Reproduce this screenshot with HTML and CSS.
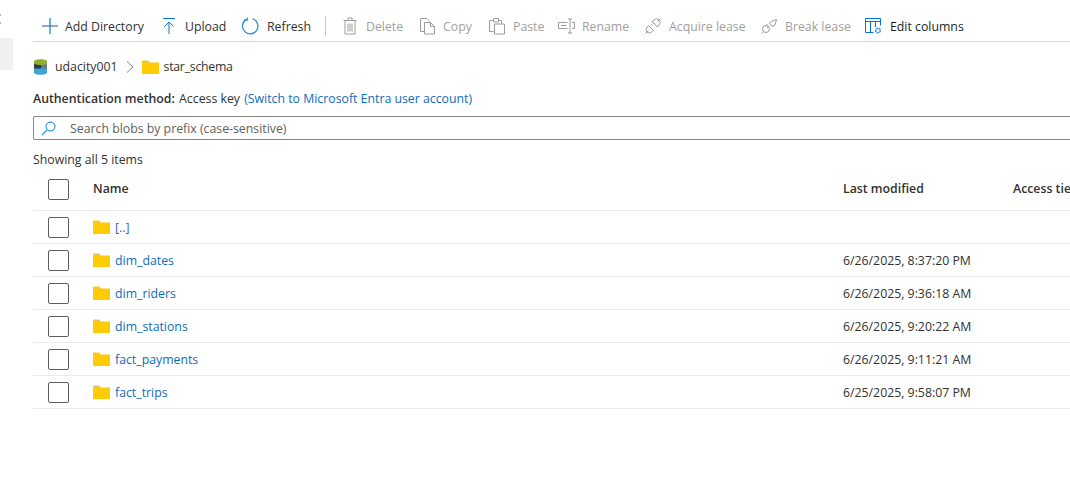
FILE: index.html
```html
<!DOCTYPE html>
<html lang="en">
<head>
<meta charset="utf-8">
<title>star_schema</title>
<link rel="stylesheet" href="styles.css">
</head>
<body>
<div class="page">
  <aside class="rail"><span class="rail-dot"></span><span class="rail-dot"></span><span class="rail-item"></span></aside>
  <main class="main">
    <div class="toolbar">
      <button class="tool w-add"><svg class="ic" width="18" height="18" viewBox="0 0 18 18"><path d="M9 1v16" stroke="#0078d4" stroke-width="1.200" fill="none"/><path d="M1 9h16" stroke="#4a6fa5" stroke-width="1.200" fill="none"/></svg><span>Add Directory</span></button>
      <button class="tool w-up"><svg class="ic" width="14" height="18" viewBox="0 0 14 18"><path d="M1 1.500h12M7 17V5M2.500 9.500 7 5l4.500 4.500" stroke="#0078d4" fill="none"/></svg><span>Upload</span></button>
      <button class="tool w-ref"><svg class="ic" width="18" height="18" viewBox="0 0 18 18"><path d="M5.500 2.400A7.700 7.700 0 1 0 11.500 1.800M6.200 .5V3.200H3" stroke="#1b87dc" stroke-width="1.200" fill="none"/></svg><span>Refresh</span></button>
      <span class="sep"></span>
      <button class="tool off w-del"><svg class="ic" width="14" height="18" viewBox="0 0 14 18"><path d="M.5 3.500h13M2 3.500V17h10V3.500M5 3.500V1h4v2.500M5 6.500v8M7 6.500v8M9 6.500v8" stroke="#9c9c9c" fill="none"/></svg><span>Delete</span></button>
      <button class="tool off w-copy"><svg class="ic" width="15" height="18" viewBox="0 0 15 18"><path d="M4.500 14.500H.5V1.500H7L10 4.500M4.500 5.500H10.500L14.500 9.500V17H4.500ZM10.500 5.500V9.500H14.500" stroke="#9c9c9c" fill="none"/></svg><span>Copy</span></button>
      <button class="tool off w-paste"><svg class="ic" width="16" height="18" viewBox="0 0 16 18"><path d="M4.500 14.500H.5V3.500H4M10 3.500H12.500V6.500M4.500 1.500H9.500V5H4.500ZM5.500 7H15.500V17H5.500Z" stroke="#9c9c9c" fill="none"/></svg><span>Paste</span></button>
      <button class="tool off w-ren"><svg class="ic" width="17" height="16" viewBox="0 0 17 16"><path d="M9.500 4.500H.5V10.500H9.500M3 7.500H8.500M14 4.500H16.500V10.500H14M10 1H14M10 15H14M12 1V15" stroke="#9c9c9c" fill="none"/></svg><span>Rename</span></button>
      <button class="tool off w-acq"><svg class="ic" width="16" height="16" viewBox="0 0 16 16"><path d="M.5 15.500 3.500 12.500M12.500 3.500 15.500.5M6 6 7.500 7.500M8.500 4.500 10 6M3.500 7.500 8.500 12.500 6.500 14a2.800 2.800 0 0 1-4.500-4.500ZM7 3.500 12.500 9 14 7a3.500 3.500 0 0 0-5-5Z" stroke="#9c9c9c" fill="none"/></svg><span>Acquire lease</span></button>
      <button class="tool off w-brk"><svg class="ic" width="17" height="16" viewBox="0 0 17 16"><path d="M.5 15.500 2.500 13.500M8 8 6 10M6.500 6 4.500 8M10 3.500 15.500 1.500 14 7 11.500 8.500 8.500 6Z" stroke="#9c9c9c" fill="none"/><circle cx="5" cy="11" r="3.500" stroke="#9c9c9c" fill="none"/></svg><span>Break lease</span></button>
      <button class="tool w-edit"><svg class="ic" width="17" height="16" viewBox="0 0 17 16"><path d="M.5 14.500V.5H15.500V7.500M.5 14.500H8.500M.5 3.500H15.500M5.500 3.500V14.500M10.500 3.500V9" stroke="#0078d4" fill="none"/><circle cx="13" cy="12.500" r="2.300" stroke="#2b8fe3" stroke-width="1.500" stroke-dasharray="2 .6" fill="none"/></svg><span class="dark">Edit columns</span></button>
    </div>

    <nav class="crumbs">
      <svg class="acct" width="13" height="16" viewBox="0 0 13 16"><path d="M0 2.500C0-.5 13-.5 13 2.500V5C13 6.500 0 6.500 0 5Z" fill="#8fb02e"/><path d="M0 4.500C2 6 5 6 7 6V10H0Z" fill="#2f3a45"/><path d="M7 6C9 6 11 6 13 4.500V10H7Z" fill="#6c7884"/><path d="M0 9.500H13V13.500C13 16.500 0 16.500 0 13.500Z" fill="#3fa3d8"/></svg>
      <span class="crumb">udacity001</span>
      <svg class="chev" width="8" height="12" viewBox="0 0 8 12"><path d="M1 .5 7 6 1 11.500" stroke="#8a8886" fill="none"/></svg>
      <svg class="folder" width="17" height="14" viewBox="0 0 17 14"><path d="M0 1.500Q0 .5 1 .5H6L8 2.500H17V14H0Z" fill="#ffcb05"/><path d="M.5 1h5L7 2.500H.5Z" fill="#e8c45c"/></svg>
      <span class="crumb tight">star_schema</span>
    </nav>

    <p class="auth"><b>Authentication method:</b> <span class="key">Access key</span> <a>(Switch to Microsoft Entra user account)</a></p>

    <div class="search">
      <svg width="15" height="15" viewBox="0 0 15 15"><circle cx="9.500" cy="5.500" r="4.500" stroke="#0078d4" fill="none"/><path d="M6 9 1 14" stroke="#3a96dd" stroke-width="1.300" fill="none"/></svg>
      <span>Search blobs by prefix (case-sensitive)</span>
    </div>

    <p class="count">Showing all 5 items</p>

    <div class="row head">
      <span class="cb"></span><span class="name">Name</span><span class="mod">Last modified</span><span class="tier">Access tier</span>
    </div>
    <div class="row">
      <span class="cb"></span><span class="name"><svg class="folder" width="17" height="14" viewBox="0 0 17 14"><path d="M0 1.500Q0 .5 1 .5H6L8 2.500H17V14H0Z" fill="#ffcb05"/><path d="M.5 1h5L7 2.500H.5Z" fill="#e8c45c"/></svg><a class="up">[..]</a></span><span class="mod"></span>
    </div>
    <div class="row">
      <span class="cb"></span><span class="name"><svg class="folder" width="17" height="14" viewBox="0 0 17 14"><path d="M0 1.500Q0 .5 1 .5H6L8 2.500H17V14H0Z" fill="#ffcb05"/><path d="M.5 1h5L7 2.500H.5Z" fill="#e8c45c"/></svg><a>dim_dates</a></span><span class="mod">6/26/2025, 8:37:20 PM</span>
    </div>
    <div class="row">
      <span class="cb"></span><span class="name"><svg class="folder" width="17" height="14" viewBox="0 0 17 14"><path d="M0 1.500Q0 .5 1 .5H6L8 2.500H17V14H0Z" fill="#ffcb05"/><path d="M.5 1h5L7 2.500H.5Z" fill="#e8c45c"/></svg><a>dim_riders</a></span><span class="mod">6/26/2025, 9:36:18 AM</span>
    </div>
    <div class="row">
      <span class="cb"></span><span class="name"><svg class="folder" width="17" height="14" viewBox="0 0 17 14"><path d="M0 1.500Q0 .5 1 .5H6L8 2.500H17V14H0Z" fill="#ffcb05"/><path d="M.5 1h5L7 2.500H.5Z" fill="#e8c45c"/></svg><a>dim_stations</a></span><span class="mod">6/26/2025, 9:20:22 AM</span>
    </div>
    <div class="row">
      <span class="cb"></span><span class="name"><svg class="folder" width="17" height="14" viewBox="0 0 17 14"><path d="M0 1.500Q0 .5 1 .5H6L8 2.500H17V14H0Z" fill="#ffcb05"/><path d="M.5 1h5L7 2.500H.5Z" fill="#e8c45c"/></svg><a>fact_payments</a></span><span class="mod">6/26/2025, 9:11:21 AM</span>
    </div>
    <div class="row">
      <span class="cb"></span><span class="name"><svg class="folder" width="17" height="14" viewBox="0 0 17 14"><path d="M0 1.500Q0 .5 1 .5H6L8 2.500H17V14H0Z" fill="#ffcb05"/><path d="M.5 1h5L7 2.500H.5Z" fill="#e8c45c"/></svg><a>fact_trips</a></span><span class="mod">6/25/2025, 9:58:07 PM</span>
    </div>
  </main>
</div>
</body>
</html>
```

FILE: styles.css
```css
* { box-sizing: border-box; }
html, body { margin: 0; height: 100%; background: #fff; overflow: hidden; }
body { font: 12.300px/16px "Open Sans", "Liberation Sans", sans-serif; color: #323130; }
.page { display: flex; width: 1070px; height: 491px; overflow: hidden; }
.rail { flex: 0 0 33px; display: flex; flex-direction: column; padding-top: 14px; }
.rail-dot { display: block; width: 1px; height: 2px; margin-bottom: 6px; background: #b5b5b5; }
.rail-item { display: block; width: 13px; height: 32px; margin-top: 8px; background: #f0f0f0; }
.main { flex: 0 0 1037px; min-width: 0; }
p { margin: 0; }
a { color: #0f6cbd; }

.toolbar { display: flex; align-items: center; height: 42px; padding-top: 11px; padding-left: 8px; border-bottom: 1px solid #d6d6d6; }
.tool { display: flex; align-items: center; height: 30px; padding: 0; border: 0; background: none; font: inherit; color: #323130; white-space: nowrap; }
.tool .ic { flex: none; }
.tool span { padding-top: 2px; }
.tool.off { color: #a19f9d; }
.tool .dark { color: #201f1e; }
.w-add { width: 121px; } .w-add span { margin-left: 6px; }
.w-up { width: 79px; } .w-up span { margin-left: 9px; }
.w-ref { width: 84px; } .w-ref span { margin-left: 8px; }
.sep { flex: none; width: 1px; height: 20px; background: #c8c8c8; margin-right: 17px; }
.w-del { width: 77px; } .w-del span { margin-left: 9px; }
.w-copy { width: 69px; } .w-copy span { margin-left: 8px; }
.w-paste { width: 69px; } .w-paste span { margin-left: 8px; }
.w-ren { width: 87px; } .w-ren span { margin-left: 7px; }
.w-acq { width: 116px; } .w-acq span { margin-left: 8px; }
.w-brk { width: 104px; } .w-brk span { margin-left: 7px; }
.w-edit { width: 100px; } .w-edit span { margin-left: 8px; }

.crumbs { display: flex; align-items: center; height: 20px; margin-top: 15px; padding-left: 1px; }
.acct { margin-right: 8px; }
.chev { flex: none; margin: 0 8px; }
.folder { flex: none; }
.crumbs .folder { margin-right: 5px; }
.tight { letter-spacing: -.25px; }

.auth { margin-top: 13px; line-height: 18px; white-space: nowrap; }
.auth b { font-weight: 600; }
.key { margin-left: 1px; }
.auth a { margin-left: 1px; }

.search { display: flex; align-items: center; height: 24px; margin-top: 8px; border: 1px solid #8a8886; border-right: 0; border-radius: 2px 0 0 2px; padding-left: 7px; color: #605e5c; }
.search span { margin-left: 14px; padding-top: 2px; }

.count { margin-top: 11px; line-height: 18px; }

.row { display: flex; align-items: center; height: 33px; border-bottom: 1px solid #ebebeb; }
.row.head { height: 42px; font-weight: 600; }
.head .name, .head .mod, .head .tier { padding-bottom: 2px; }
.cb { flex: none; width: 21px; height: 21px; margin-left: 15px; border: 1px solid #605e5c; border-radius: 2px; }
.name { flex: none; width: 750px; margin-left: 24px; display: flex; align-items: center; }
.name .folder { margin-right: 5px; }
.name a { padding-top: 2px; }
.mod { flex: none; width: 170px; white-space: nowrap; }
.row:not(.head) .mod { padding-top: 2px; }
.tier { white-space: nowrap; }
.up { color: #3a5fcd; }
```
